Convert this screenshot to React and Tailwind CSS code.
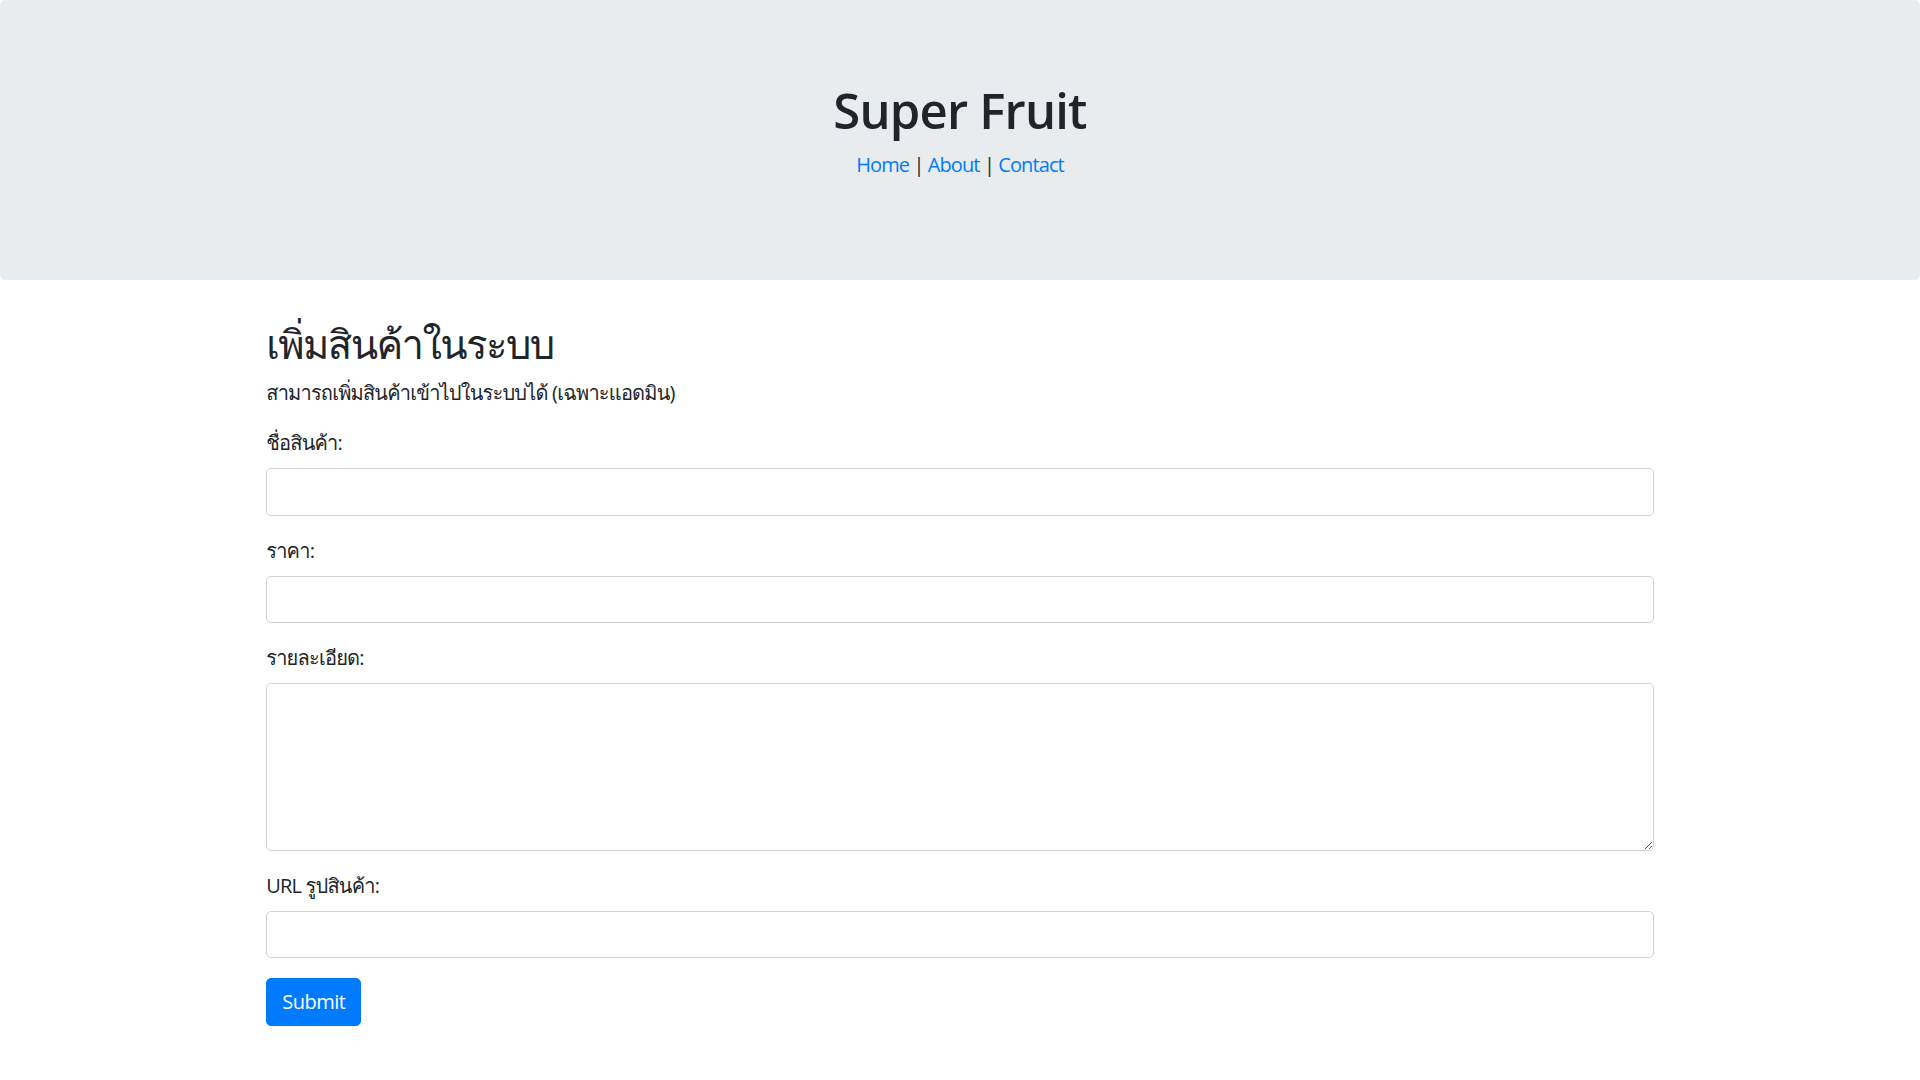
import React from "react";

const fieldClass =
  "block w-full h-[47.5px] px-[15px] py-[7.5px] bg-white border border-[#ced4da] rounded-[5px] text-[20px] text-[#495057] outline-none";

const labelClass = "block mb-[10px] tracking-[-0.8px]";

const App = () => {
  return (
    <div className="min-h-screen bg-white text-[#212529] text-[20px] leading-[1.5] font-['Open_Sans','Tahoma','Leelawadee_UI','Loma','Garuda','Noto_Sans_Thai_Looped','Noto_Sans_Thai','Noto_Sans',sans-serif]">
      <div className="bg-[#e9ecef] rounded-[6px] px-10 py-20 mb-10 text-center">
        <h1 className="text-[49px] font-semibold leading-[60px] mb-[10px] tracking-[-0.8px]">
          Super Fruit
        </h1>
        <p className="mb-5 tracking-[-0.9px]">
          <a href="#" className="text-[#007bff]">
            Home
          </a>{" "}
          |{" "}
          <a href="#" className="text-[#007bff]">
            About
          </a>{" "}
          |{" "}
          <a href="#" className="text-[#007bff]">
            Contact
          </a>
        </p>
      </div>

      <div className="w-[1425px] mx-auto px-[18.75px]">
        <h2 className="text-[40px] font-medium leading-[1.2] mb-[10px] tracking-[-1.6px]">
          เพิ่มสินค้าในระบบ
        </h2>
        <p className="mb-5 tracking-[-0.8px]">
          สามารถเพิ่มสินค้าเข้าไปในระบบได้ (เฉพาะแอดมิน)
        </p>

        <form onSubmit={(e) => e.preventDefault()}>
          <div className="mb-5">
            <label className={labelClass}>ชื่อสินค้า:</label>
            <input type="text" className={fieldClass} />
          </div>
          <div className="mb-5">
            <label className={labelClass}>ราคา:</label>
            <input type="text" className={fieldClass} />
          </div>
          <div className="mb-5">
            <label className={labelClass}>รายละเอียด:</label>
            <textarea
              rows={5}
              className="block w-full h-[167.5px] px-[15px] py-[7.5px] bg-white border border-[#ced4da] rounded-[5px] text-[20px] text-[#495057] outline-none resize-y"
            />
          </div>
          <div className="mb-5">
            <label className={labelClass}>URL รูปสินค้า:</label>
            <input type="text" className={fieldClass} />
          </div>
          <button
            type="submit"
            className="h-[47.5px] px-[15px] bg-[#007bff] border border-[#007bff] rounded-[5px] text-white text-[20px] leading-[1.5] tracking-[-0.5px]"
          >
            Submit
          </button>
        </form>
      </div>
    </div>
  );
};

export default App;
